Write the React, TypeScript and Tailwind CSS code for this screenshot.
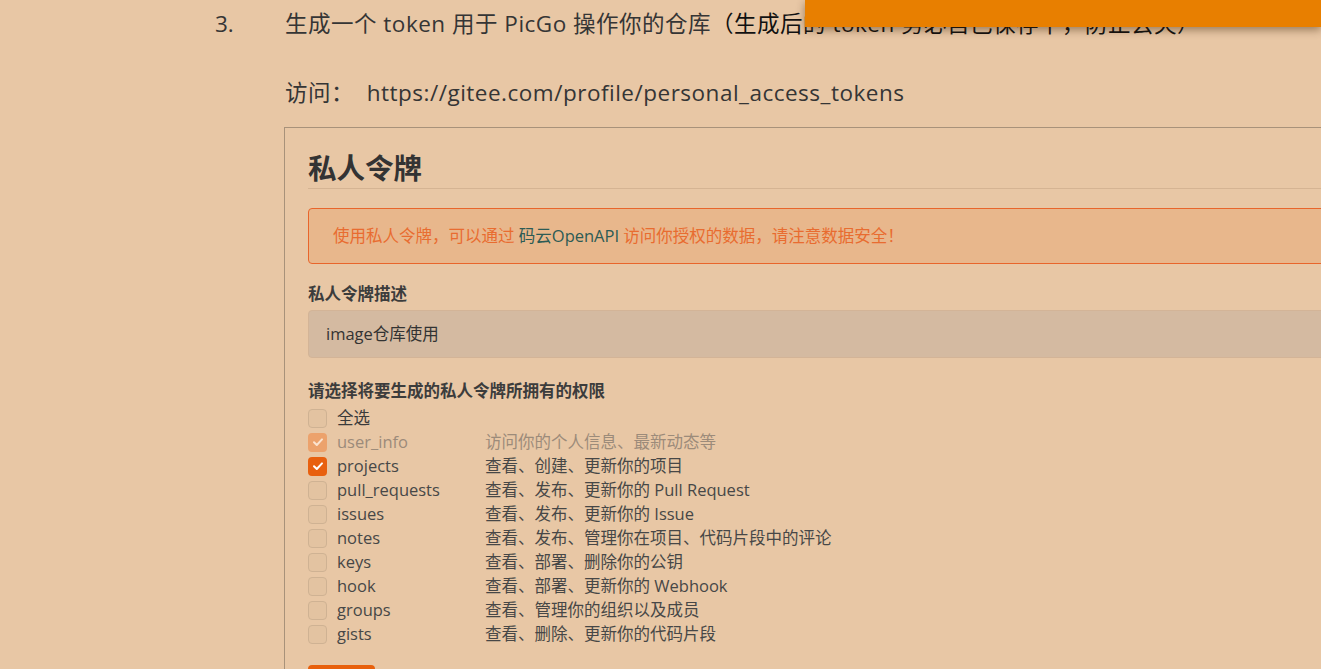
import React from 'react';

interface Scope {
  name: string;
  desc: string;
  state: 'off' | 'on' | 'locked';
}

const scopes: Scope[] = [
  { name: 'user_info', desc: '访问你的个人信息、最新动态等', state: 'locked' },
  { name: 'projects', desc: '查看、创建、更新你的项目', state: 'on' },
  { name: 'pull_requests', desc: '查看、发布、更新你的 Pull Request', state: 'off' },
  { name: 'issues', desc: '查看、发布、更新你的 Issue', state: 'off' },
  { name: 'notes', desc: '查看、发布、管理你在项目、代码片段中的评论', state: 'off' },
  { name: 'keys', desc: '查看、部署、删除你的公钥', state: 'off' },
  { name: 'hook', desc: '查看、部署、更新你的 Webhook', state: 'off' },
  { name: 'groups', desc: '查看、管理你的组织以及成员', state: 'off' },
  { name: 'gists', desc: '查看、删除、更新你的代码片段', state: 'off' },
];

const Check: React.FC<{ state: 'off' | 'on' | 'locked' }> = ({ state }) => {
  if (state === 'off') {
    return <div className="shrink-0 w-[19px] h-[19px] rounded-[4px] border border-[#cfb293] bg-[#e3c3a1]" />;
  }
  const bg = state === 'on' ? 'bg-[#e8600f]' : 'bg-[#eca26c]';
  return (
    <div className={`shrink-0 w-[19px] h-[19px] rounded-[4px] ${bg} flex items-center justify-center`}>
      <svg width="12" height="12" viewBox="0 0 12 12" fill="none">
        <path d="M2 6.2 L4.8 9 L10 3.4" stroke={state === 'on' ? '#ffffff' : '#fbe3cf'} strokeWidth="2" strokeLinecap="round" strokeLinejoin="round" />
      </svg>
    </div>
  );
};

const App: React.FC = () => {
  return (
    <div
      className="relative w-[1321px] h-[669px] overflow-hidden bg-[#e8c7a5] text-[#353535]"
      style={{ fontFamily: '"Open Sans", "Noto Sans CJK SC", sans-serif' }}
    >
      {/* toast in the corner, scrolled mostly out of view */}
      <div className="absolute top-0 left-[805px] right-0 h-[27px] bg-[#e87f00] overflow-hidden shadow-[0_3px_9px_rgba(60,30,0,0.45)] z-10">
        <div className="pl-[38px] -mt-[23px] text-[20px] leading-[28px] text-[#f6d3a8] whitespace-nowrap">
          在编辑模式（支持快捷键）后使用。
        </div>
      </div>

      <div className="pt-[7px] pl-[215px] flex">
        <div className="shrink-0 w-[70px] text-[22.5px] leading-[34px]">3.</div>
        <div className="min-w-0 flex-1">
          <div className="text-[22.5px] tracking-[0.5px] leading-[34px] whitespace-nowrap">
            生成一个 token 用于 PicGo 操作你的仓库<span className="text-[#111]">（生成后的 token 务必自己保存下，防止丢失）</span>
          </div>
          <div className="mt-[35px] text-[22.5px] tracking-[0.5px] leading-[34px] whitespace-nowrap">
            访问：&nbsp;&nbsp;https://gitee.com/profile/personal_access_tokens
          </div>

          <div className="mt-[17px] -ml-[1px] w-[1200px] border-l border-t border-[#a8927a] pl-[23px]">
            <div className="pt-[20px] h-[61px] border-b border-[#d5b493] text-[28.5px] leading-[40px] font-bold text-[#333]">
              私人令牌
            </div>

            <div className="mt-[19px] h-[56px] rounded-[4px] border border-[#e8652b] bg-[#e8b78c] flex items-center pl-[24px] text-[16.5px] text-[#e86c30] whitespace-nowrap">
              使用私人令牌，可以通过&nbsp;<span className="text-[#2d5b55]">码云OpenAPI</span>&nbsp;访问你授权的数据，请注意数据安全！
            </div>

            <div className="mt-[18px] text-[16.5px] leading-[24px] font-bold text-[#3c3c3c]">私人令牌描述</div>
            <div className="mt-[4px] h-[48px] rounded-[4px] border border-[#d3b497] bg-[#d4baa1] flex items-center pl-[17px] text-[16.5px] text-[#333]">
              image仓库使用
            </div>

            <div className="mt-[21px] text-[16.5px] leading-[24px] font-bold text-[#3c3c3c]">请选择将要生成的私人令牌所拥有的权限</div>

            <div className="mt-[3px] text-[16.5px]">
              <div className="h-[24px] flex items-center">
                <Check state="off" />
                <span className="ml-[10px] text-[#3a3a3a]">全选</span>
              </div>
              {scopes.map((s) => (
                <div key={s.name} className="h-[24px] flex items-center whitespace-nowrap">
                  <Check state={s.state} />
                  <span className={`ml-[10px] w-[148px] shrink-0 ${s.state === 'locked' ? 'text-[#9c8b7a]' : 'text-[#474747]'}`}>{s.name}</span>
                  <span className={s.state === 'locked' ? 'text-[#9c8b7a]' : 'text-[#474747]'}>{s.desc}</span>
                </div>
              ))}
            </div>

            <div className="mt-[19px] w-[67px] h-[36px] rounded-[4px] bg-[#e8600c]" />
          </div>
        </div>
      </div>
    </div>
  );
};

export default App;
